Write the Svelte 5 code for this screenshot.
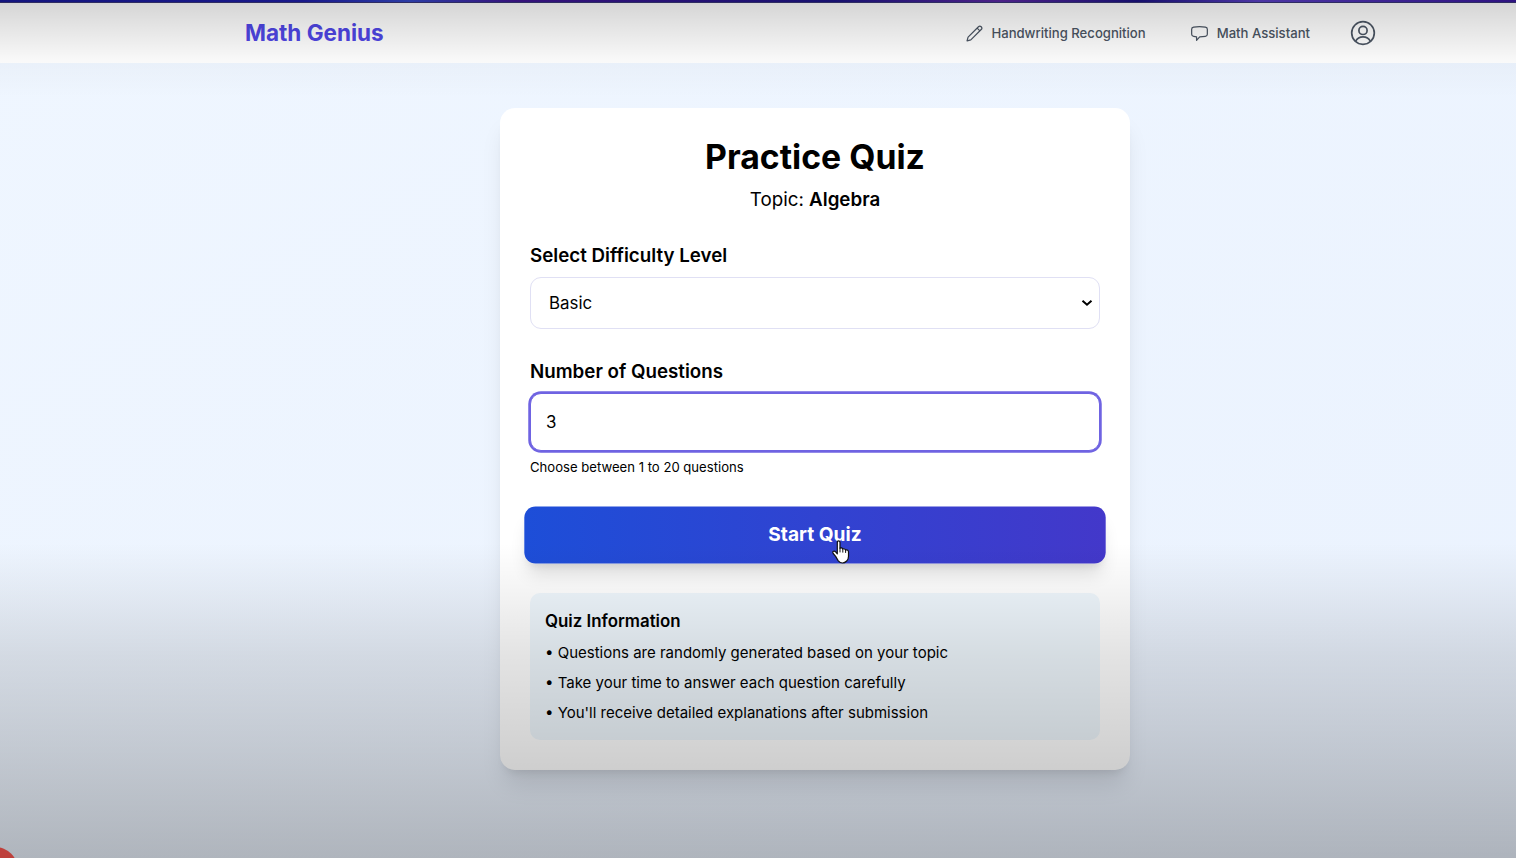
<script>
  let difficulty = $state('Basic');
  let questionCount = $state(3);

  const levels = ['Basic', 'Intermediate', 'Advanced'];
  const notes = [
    'Questions are randomly generated based on your topic',
    'Take your time to answer each question carefully',
    "You'll receive detailed explanations after submission",
  ];
</script>

<div class="viewport">
  <div class="strip"></div>
  <div class="page">
    <header>
      <nav>
        <a class="brand" href="#home">Math Genius</a>
        <div class="links">
          <a class="link" href="#handwriting">
            <svg class="icon" viewBox="0 0 18 18">
              <path d="M1.100 16.900 2.200 12.900 13.200 1.900a2.050 2.050 0 0 1 2.900 2.900L5.100 15.800ZM11.800 3.300l2.900 2.900" />
            </svg>
            Handwriting Recognition
          </a>
          <a class="link" href="#assistant">
            <svg class="icon" viewBox="0 0 18 18">
              <path d="M2.800 2.300Q9 1.300 15.200 2.300 17.300 2.600 17.300 4.500v5.400q0 1.900-2.100 2.200-3 .5-6 .5L5.900 16.200v-3.700l-3.100-.4Q.7 11.800.7 9.900V4.500Q.7 2.600 2.800 2.300Z" />
            </svg>
            Math Assistant
          </a>
          <a class="account" href="#account" aria-label="Account">
            <svg viewBox="0 0 26 26">
              <circle cx="13" cy="13" r="11.300" />
              <circle cx="13" cy="10.400" r="4.100" />
              <path d="M5.500 21.300a8.600 8.600 0 0 1 15 0" />
            </svg>
          </a>
        </div>
      </nav>
    </header>

    <main>
      <section class="card">
        <h1>Practice Quiz</h1>
        <p class="topic">Topic: <strong>Algebra</strong></p>

        <label for="difficulty">Select Difficulty Level</label>
        <div class="field">
          <select id="difficulty" bind:value={difficulty}>
            {#each levels as level}
              <option value={level}>{level}</option>
            {/each}
          </select>
          <svg class="chevron" viewBox="0 0 12 8"><path d="m1.500 1.700 4.500 4 4.500-4" /></svg>
        </div>

        <label for="count">Number of Questions</label>
        <input id="count" type="text" inputmode="numeric" bind:value={questionCount} />
        <p class="hint">Choose between 1 to 20 questions</p>

        <button class="start" type="button">Start Quiz</button>

        <div class="info">
          <h2>Quiz Information</h2>
          <ul>
            {#each notes as note}
              <li>• {note}</li>
            {/each}
          </ul>
        </div>
      </section>
    </main>
  </div>

  <div class="record"></div>
  <div class="shade"></div>

  <svg class="pointer" viewBox="0 0 18 24">
    <path d="M5.300 2.400Q5.300.8 6.600.8T8 2.400V8.200Q10 7.300 10.700 9 12.800 8.200 13.500 10 16.500 9.300 16.500 12v4.300q0 3-1.800 4.700-2 2-4.200 2-2.400 0-4.200-2.200Q5 18.900 3.800 16.600L1.200 13.500Q.2 11.800 1.500 11.200q1.200-.5 2.400 1l1.400 1.600Z" />
    <path class="fold" d="M8 8v4M10.800 9v3.200M13.600 10v2.500" />
  </svg>
</div>

<style>
  :global(body) {
    overflow: hidden;
  }
  .viewport {
    position: relative;
    width: 100%;
    height: 100vh;
    overflow: hidden;
    font-family: Inter, 'Liberation Sans', sans-serif;
    color: #000;
  }
  .strip {
    height: 3px;
    box-sizing: border-box;
    border-bottom: 1px solid #2f2c62;
    background: linear-gradient(90deg, #14157e 0, #18188a 20%, #2c3ca5 27%, #35127a 34%, #17116f 55%, #4b2187 66%, #160f6c 75%, #4b35a4 83%, #2d1280 100%);
  }
  /* wider than the window: the content is centred on 1630px */
  .page {
    width: 1630px;
    height: calc(100vh - 3px);
    background: linear-gradient(to bottom right, #eff6ff, #eaf2fe);
  }
  header {
    height: 60px;
    background: #fff;
  }
  nav {
    box-sizing: border-box;
    width: 1200px;
    height: 100%;
    margin: 0 auto;
    padding: 0 30px;
    display: flex;
    align-items: center;
    justify-content: space-between;
  }
  a {
    color: inherit;
    text-decoration: none;
  }
  .brand {
    margin-bottom: 1px;
    font-size: 22.5px;
    font-weight: 700;
    color: #4f46e5;
  }
  .links {
    display: flex;
    align-items: center;
    margin-right: 9px;
  }
  .link {
    display: flex;
    align-items: center;
    gap: 8px;
    margin-right: 45px;
    font-size: 13.125px;
    font-weight: 500;
    color: #4b5563;
    white-space: nowrap;
  }
  .link + .link {
    gap: 9px;
    margin-right: 40px;
  }
  svg {
    display: block;
    fill: none;
    stroke: #4b5563;
    stroke-linejoin: round;
    stroke-linecap: round;
  }
  .icon {
    width: 17px;
    height: 17px;
    stroke-width: 1.3;
  }
  .account svg {
    width: 26px;
    height: 26px;
    stroke-width: 1.7;
  }
  main {
    display: flex;
    justify-content: center;
    padding-top: 45px;
  }
  .card {
    box-sizing: border-box;
    width: 630px;
    height: 662px;
    padding: 30px;
    display: flex;
    flex-direction: column;
    background: #fff;
    border-radius: 15px;
    box-shadow: 0 19px 24px -5px rgb(0 0 0 / 0.1), 0 8px 10px -6px rgb(0 0 0 / 0.1);
  }
  h1 {
    margin: 0 0 11px;
    font-size: 33.75px;
    line-height: 38px;
    font-weight: 700;
    text-align: center;
  }
  .topic {
    margin: 0 0 30px;
    font-size: 18.75px;
    line-height: 26px;
    text-align: center;
  }
  .topic strong {
    font-weight: 600;
  }
  label {
    margin-bottom: 8px;
    font-size: 18.75px;
    line-height: 26px;
    font-weight: 600;
  }
  .field {
    position: relative;
    margin-bottom: 30px;
  }
  select,
  input {
    display: block;
    box-sizing: border-box;
    width: 100%;
    border-radius: 11px;
    background: #fff;
    font-family: inherit;
    font-size: 16.875px;
    color: #000;
  }
  select {
    height: 52px;
    padding: 0 18px;
    border: 1px solid #e0e0f4;
    appearance: none;
  }
  .chevron {
    position: absolute;
    top: 22px;
    right: 7px;
    width: 12px;
    height: 8px;
    stroke: #000;
    stroke-width: 2;
    stroke-linecap: butt;
    stroke-linejoin: miter;
    pointer-events: none;
  }
  input {
    height: 58px;
    padding: 0 15px;
    border: 1px solid #6f63e2;
    outline: none;
    box-shadow: 0 0 0 1.75px #6f63e2;
  }
  .hint {
    margin: 7px 0 30px;
    font-size: 13.125px;
    line-height: 19px;
  }
  .start {
    flex: none;
    height: 55.5px;
    padding: 0;
    border: 0;
    border-radius: 11px;
    background: linear-gradient(to right, #1d4ed8, #4338ca);
    box-shadow: 0 14px 18px -4px rgb(0 0 0 / 0.12), 0 6px 8px -5px rgb(0 0 0 / 0.1);
    font-family: inherit;
    font-size: 18.75px;
    font-weight: 700;
    color: #fff;
    transform: scale(1.02);
  }
  .info {
    box-sizing: border-box;
    height: 147px;
    margin-top: auto;
    padding: 15px;
    border-radius: 10px;
    background: #eff7fd;
  }
  h2 {
    margin: 0 0 7px;
    font-size: 16.875px;
    line-height: 26px;
    font-weight: 600;
  }
  ul {
    margin: 0;
    padding: 0;
    list-style: none;
    display: grid;
    gap: 7px;
  }
  li {
    font-size: 15px;
    line-height: 23px;
  }
  .record {
    position: absolute;
    left: -28px;
    bottom: -35px;
    width: 46px;
    height: 46px;
    border-radius: 50%;
    background: #ff5650;
  }
  .shade {
    position: absolute;
    inset: 3px 0 0;
    pointer-events: none;
    background:
      linear-gradient(rgb(0 0 0 / 0.165), rgb(0 0 0 / 0.11) 22px, rgb(0 0 0 / 0.025) 58px, transparent 95px),
      linear-gradient(transparent 540px, rgb(0 0 0 / 0.045) 587px, rgb(0 0 0 / 0.11) 653px, rgb(0 0 0 / 0.185) 757px, rgb(0 0 0 / 0.26) 855px);
  }
  .pointer {
    position: absolute;
    left: 832px;
    top: 540px;
    width: 18px;
    height: 24px;
    fill: #fff;
    stroke: #111;
    stroke-width: 1.2;
  }
  .pointer .fold {
    fill: none;
    stroke-width: 1;
  }
</style>
